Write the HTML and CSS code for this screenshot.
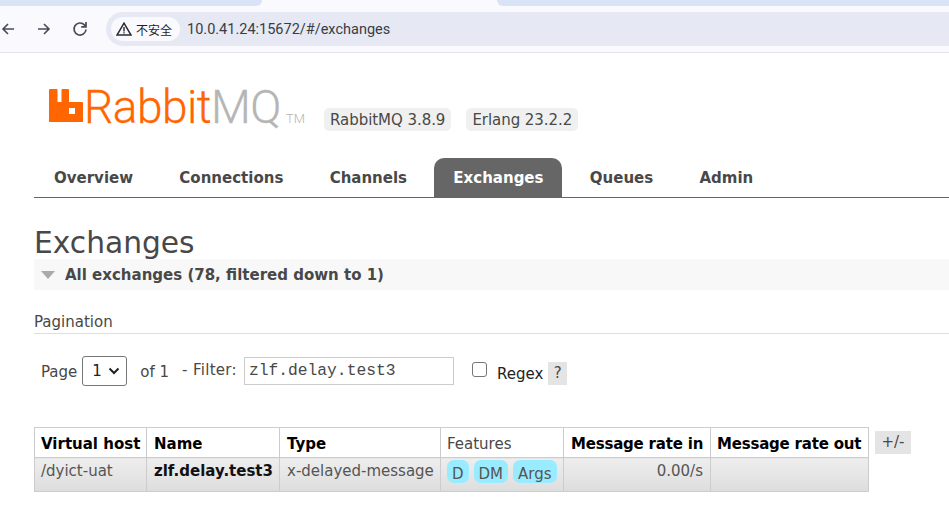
FILE: index.html
```html
<!DOCTYPE html>
<html lang="en">
<head>
  <meta charset="UTF-8">
  <title>RabbitMQ Management</title>
  <link rel="stylesheet" href="styles.css">
</head>
<body>
  <div class="tabstrip">
    <div class="tab-left"></div>
    <div class="tab-right"></div>
  </div>
  <div class="toolbar">
    <svg class="nav-icon" width="16" height="16" viewBox="0 0 16 16"><path d="M14 8H3.500M8 3L3 8l5 5" fill="none" stroke="#474b57" stroke-width="1.6"/></svg>
    <svg class="nav-icon" width="16" height="16" viewBox="0 0 16 16"><path d="M2 8h11M8 3l5 5-5 5" fill="none" stroke="#474b57" stroke-width="1.6"/></svg>
    <svg class="nav-icon" width="16" height="16" viewBox="0 0 16 16"><path d="M14 8.500A6 6 0 1 1 12.400 3.900L14 5.500M14 1v4.800H9.200" fill="none" stroke="#474b57" stroke-width="1.700"/></svg>
    <div class="omnibox">
      <span class="security">
        <svg width="16" height="14" viewBox="0 0 16 14"><path d="M8 1.200L15 13H1z" fill="none" stroke="#2b2c30" stroke-width="1.500"/><path d="M8 5v4.400M8 10.200v1.400" stroke="#2b2c30" stroke-width="1.400"/></svg>
        不安全
      </span>
      <span class="url">10.0.41.24:15672/#/exchanges</span>
    </div>
  </div>

  <div class="page">
    <div class="header">
      <div class="logo">
        <svg class="logo-mark" width="34" height="35" viewBox="0 0 34 35"><path fill-rule="evenodd" fill="#f60" d="M1 1h6.500a1 1 0 0 1 1 1v12h4V2a1 1 0 0 1 1-1H19a1 1 0 0 1 1 1v12h13a1 1 0 0 1 1 1v19H0V2a1 1 0 0 1 1-1zM20 20v6h6v-6z"/></svg>
        <span class="logo-rabbit">Rabbit</span><span class="logo-mq">MQ</span><span class="logo-tm">TM</span>
      </div>
      <span class="version">RabbitMQ 3.8.9</span>
      <span class="version">Erlang 23.2.2</span>
    </div>

    <ul class="menu">
      <li>Overview</li>
      <li>Connections</li>
      <li>Channels</li>
      <li class="selected">Exchanges</li>
      <li>Queues</li>
      <li>Admin</li>
    </ul>

    <h1>Exchanges</h1>
    <div class="section-title"><span class="arrow"></span>All exchanges (78, filtered down to 1)</div>

    <h3>Pagination</h3>
    <div class="filter-row">
      <label class="page-label">Page</label>
      <span class="page-select">1<svg width="12" height="8" viewBox="0 0 12 8"><path d="M1.500 1.500L6 6l4.500-4.500" fill="none" stroke="#222" stroke-width="2"/></svg></span>
      <label class="of">of 1</label>
      <label class="filter-label">- Filter:</label>
      <span class="filter-input">zlf.delay.test3</span>
      <span class="checkbox"></span>
      <label class="regex">Regex</label>
      <span class="help">?</span>
    </div>

    <div class="table-row">
      <table>
        <colgroup>
          <col class="c1"><col class="c2"><col class="c3"><col class="c4"><col class="c5"><col class="c6">
        </colgroup>
        <thead>
          <tr>
            <th>Virtual host</th>
            <th class="wide">Name</th>
            <th class="wide">Type</th>
            <th class="plain">Features</th>
            <th class="wide tight">Message rate in</th>
            <th class="tight">Message rate out</th>
          </tr>
        </thead>
        <tbody>
          <tr>
            <td>/dyict-uat</td>
            <td class="name wide">zlf.delay.test3</td>
            <td class="wide">x-delayed-message</td>
            <td class="features"><span class="tag">D</span><span class="tag">DM</span><span class="tag">Args</span></td>
            <td class="num">0.00/s</td>
            <td></td>
          </tr>
        </tbody>
      </table>
      <span class="columns-btn">+/-</span>
    </div>
  </div>
</body>
</html>
```

FILE: styles.css
```css
body {
  margin: 0;
  background: #fff;
  font-family: "DejaVu Sans", Verdana, sans-serif;
  font-size: 15px;
  color: #484848;
  overflow: hidden;
}

.tabstrip {
  height: 12px;
  background: #f9f9fe;
  position: relative;
}

.tab-left {
  position: absolute;
  left: 0;
  top: 0;
  width: 262px;
  height: 6px;
  background: #d8e3f6;
  border-bottom-right-radius: 8px;
}

.tab-right {
  position: absolute;
  left: 497px;
  right: 0;
  top: 0;
  height: 6px;
  background: #d8e3f6;
  border-bottom-left-radius: 8px;
}

.toolbar {
  height: 40px;
  background: #f9f9fe;
  border-bottom: 1px solid #e2e4ee;
  display: flex;
  align-items: flex-start;
}

.nav-icon {
  margin-top: 9px;
  margin-right: 20px;
}

.omnibox {
  flex: 1;
  height: 34px;
  margin-left: -2px;
  background: #e6e9f4;
  border-radius: 17px 0 0 17px;
  display: flex;
  align-items: center;
  padding-left: 5px;
}

.security {
  display: flex;
  align-items: center;
  gap: 4px;
  height: 24px;
  padding: 0 8px 0 5px;
  background: #f9f9fe;
  border-radius: 12px;
  font-family: "Noto Sans CJK SC", sans-serif;
  font-size: 12px;
  color: #1f1f1f;
}

.url {
  margin-left: 7px;
  font-family: "Roboto", "Liberation Sans", sans-serif;
  font-size: 14.500px;
  color: #3a3c42;
}

.page {
  padding-left: 34px;
}

.header {
  height: 105px;
  display: flex;
  align-items: flex-start;
}

.logo {
  display: flex;
  align-items: baseline;
  width: 290px;
  margin-top: 26px;
  padding-left: 15px;
  box-sizing: border-box;
  font-family: "Roboto", sans-serif;
  font-weight: 300;
  font-size: 46px;
  letter-spacing: -0.500px;
  -webkit-text-stroke: 0.300px;
  line-height: 56px;
  white-space: nowrap;
}

.logo-mark {
  align-self: flex-start;
  margin-top: 9px;
  margin-right: 1px;
  flex: none;
}

.logo-rabbit {
  color: #f60;
}

.logo-mq {
  color: #b5b5b5;
}

.logo-tm {
  margin-left: 5px;
  font-size: 13px;
  letter-spacing: 0;
  -webkit-text-stroke: 0;
  color: #b5b5b5;
}

.version {
  margin-top: 55px;
  margin-right: 15px;
  padding: 2px 6px;
  height: 19px;
  line-height: 21px;
  background: #f0f0f0;
  border-radius: 5px;
  font-size: 15px;
  letter-spacing: -0.050px;
}

.menu {
  list-style: none;
  margin: 0;
  padding: 0 0 0 1px;
  height: 39px;
  display: flex;
  border-bottom: 1px solid #666;
}

.menu li {
  padding: 0 19px;
  margin-right: 8.300px;
  height: 39px;
  line-height: 41px;
  font-weight: bold;
  font-size: 15px;
  color: #484848;
}

.menu .selected {
  background: #666;
  color: #fff;
  border-radius: 10px 10px 0 0;
}

h1 {
  margin: 0;
  padding-top: 26px;
  height: 35px;
  line-height: 37px;
  font-size: 29.700px;
  font-weight: normal;
  color: #484848;
}

.section-title {
  height: 31px;
  line-height: 30px;
  background: #f8f8f8;
  font-weight: bold;
  font-size: 15px;
  display: flex;
  align-items: center;
}

.arrow {
  width: 0;
  height: 0;
  margin: 0 10px 0 7px;
  border-left: 7px solid transparent;
  border-right: 7px solid transparent;
  border-top: 8px solid #aaa;
}

h3 {
  margin: 0;
  padding-top: 22px;
  height: 21px;
  line-height: 21px;
  font-size: 15px;
  font-weight: normal;
  border-bottom: 1px solid #ddd;
  color: #484848;
}

.filter-row {
  display: flex;
  align-items: center;
  height: 40px;
  margin-top: 17px;
  padding-left: 7px;
  font-size: 15px;
}

.page-label {
  margin-top: 2px;
}

.page-select {
  display: flex;
  align-items: center;
  justify-content: space-between;
  box-sizing: border-box;
  width: 45px;
  height: 30px;
  margin-left: 5px;
  padding: 0 6px 0 9px;
  border: 1px solid #767676;
  border-radius: 3px;
  font-size: 15px;
  color: #222;
}

.of {
  margin-left: 13px;
  margin-top: 2px;
}

.filter-label {
  margin-left: 13px;
  margin-top: -2px;
  letter-spacing: 0.300px;
}

.filter-input {
  box-sizing: border-box;
  width: 210px;
  height: 28px;
  line-height: 25px;
  margin-left: 7px;
  padding-left: 4px;
  border: 1px solid #ccc;
  font-family: "Liberation Mono", monospace;
  font-size: 16.300px;
  color: #484848;
}

.checkbox {
  box-sizing: border-box;
  width: 15px;
  height: 15px;
  margin-left: 18px;
  margin-top: -4px;
  border: 1px solid #767676;
  border-radius: 3px;
  background: #fff;
}

.regex {
  margin-left: 10px;
  margin-top: 5px;
  color: #222;
}

.help {
  width: 19px;
  height: 23px;
  line-height: 23px;
  margin-left: 5px;
  margin-top: 5px;
  text-align: center;
  background: #e4e4e4;
}

.table-row {
  display: flex;
  align-items: flex-start;
  margin-top: 36px;
}

table {
  width: 834px;
  table-layout: fixed;
  border-collapse: collapse;
  font-size: 15px;
}

.c1 { width: 112px; }
.c2 { width: 133px; }
.c3 { width: 161px; }
.c4 { width: 123px; }
.c5 { width: 147px; }
.c6 { width: 158px; }

th, td {
  border: 1px solid #ccc;
  padding: 0 6px;
  white-space: nowrap;
  overflow: hidden;
}

th {
  height: 27px;
  padding-top: 2px;
  font-weight: bold;
  text-align: left;
  color: #000;
}

th.plain {
  font-weight: normal;
  color: #484848;
}

th.tight {
  letter-spacing: -0.200px;
}

td {
  height: 31px;
  padding-bottom: 1px;
  vertical-align: top;
  line-height: 26px;
  background: linear-gradient(#eee, #ddd);
  color: #555;
}

th.wide, td.wide {
  padding-left: 7px;
}

.name {
  font-weight: bold;
  color: #111;
}

td.num {
  text-align: right;
  padding-right: 7px;
}

.features {
  padding: 2px 0 0 6px;
}

.tag {
  display: inline-block;
  height: 23px;
  line-height: 28px;
  padding: 0 5px;
  margin-right: 5px;
  background: #99ebff;
  border-radius: 7px;
}

.columns-btn {
  width: 36px;
  height: 23px;
  line-height: 23px;
  margin: 4px 0 0 6px;
  text-align: center;
  background: #e4e4e4;
  font-size: 15px;
}
```
